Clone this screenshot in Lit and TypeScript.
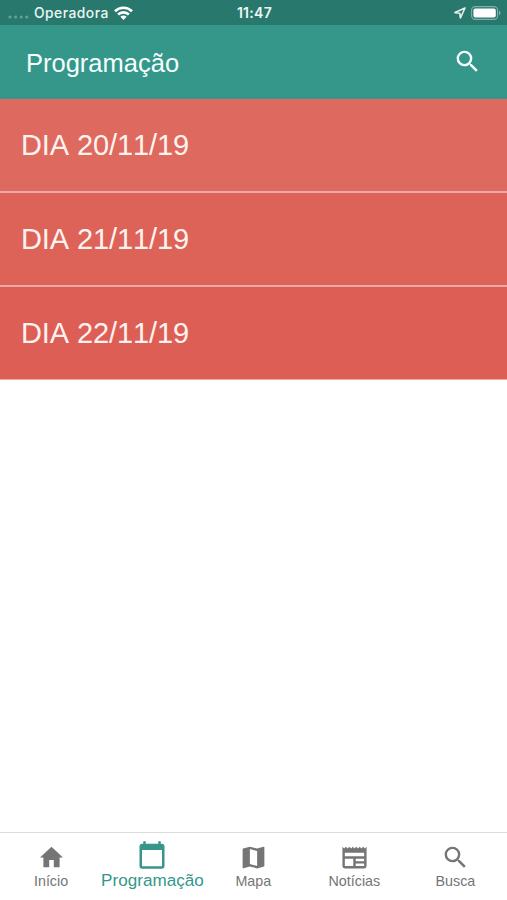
import { LitElement, html, svg, css } from "lit";
import { customElement } from "lit/decorators.js";
import { classMap } from "lit/directives/class-map.js";

const SEARCH =
  "M15.5 14h-.79l-.28-.27A6.47 6.47 0 0 0 16 9.5 6.5 6.5 0 1 0 9.5 16c1.61 0 3.09-.59 4.23-1.57l.27.28v.79l5 4.99L20.49 19l-4.99-5zm-6 0C7.01 14 5 11.99 5 9.5S7.01 5 9.5 5 14 7.01 14 9.5 11.99 14 9.5 14z";

const TABS = [
  { label: "Início", path: "M10.1 20v-6h3.8v6h4.8v-8h2.8L12 3 2.5 12h2.8v8z" },
  {
    label: "Programação",
    active: true,
    path: "M20 3h-1V1h-2v2H7V1H5v2H4c-1.1 0-2 .9-2 2v16c0 1.1.9 2 2 2h16c1.1 0 2-.9 2-2V5c0-1.1-.9-2-2-2zm0 18H4V8h16v13z",
  },
  {
    label: "Mapa",
    path: "M20.5 3l-.16.03L15 4.6 9 3 3.36 4.5c-.21.07-.36.25-.36.48V20.5c0 .28.22.5.5.5l.16-.03L9 19.4l6 1.6 5.64-1.5c.21-.07.36-.25.36-.48V3.5c0-.28-.22-.5-.5-.5zM15 19l-6-1.7V5l6 1.7V19z",
  },
  {
    label: "Notícias",
    path: "M2 3l1.43 1.5L4.86 3l1.43 1.5L7.71 3l1.43 1.5L10.57 3 12 4.5 13.43 3l1.43 1.5L16.29 3l1.42 1.5L19.14 3l1.43 1.5L22 3v16a2 2 0 0 1-2 2H4a2 2 0 0 1-2-2zM4 8v3h16V8zM4 13v6h7v-6zM13 13v2h7v-2zM13 17v2h7v-2z",
  },
  { label: "Busca", path: SEARCH },
];

const DAYS = ["20/11/19", "21/11/19", "22/11/19"];

const icon = (path: string) =>
  html`<svg class="icon" viewBox="0 0 24 24">${svg`<path fill-rule="evenodd" d=${path} />`}</svg>`;

@customElement("app-root")
export class AppRoot extends LitElement {
  static styles = css`
    :host {
      display: flex;
      flex-direction: column;
      height: 900px;
      background: #fff;
      font-family: "Liberation Sans", Arial, sans-serif;
      font-kerning: none;
      overflow: hidden;
    }
    svg {
      display: block;
      flex: none;
    }
    .icon {
      width: 29px;
      height: 29px;
      fill: currentColor;
    }
    .status {
      display: grid;
      grid-template-columns: 1fr auto 1fr;
      align-items: center;
      height: 25px;
      padding: 1px 6px 0 8px;
      box-sizing: border-box;
      background: #29786d;
      color: #edf6f4;
      font: 600 13.5px/24px Inter, sans-serif;
    }
    .carrier,
    .power {
      display: flex;
      align-items: center;
    }
    .carrier {
      font-weight: 500;
      font-size: 13.8px;
      letter-spacing: 0.5px;
    }
    .time {
      font-size: 14px;
      letter-spacing: 0.3px;
    }
    .dots {
      width: 21px;
      height: 4px;
      margin: 8px 5px 0 0;
      fill: #63a097;
    }
    .wifi {
      width: 19px;
      height: 14px;
      margin-left: 5px;
      fill: none;
      stroke: #fff;
      stroke-width: 2.6;
    }
    .wifi .core {
      fill: #fff;
      stroke: none;
    }
    .power {
      justify-content: flex-end;
    }
    .arrow {
      width: 12px;
      height: 12px;
      margin-right: 5px;
      fill: none;
      stroke: #e4f1ef;
      stroke-width: 1.6;
      stroke-linejoin: round;
    }
    .battery {
      width: 30px;
      height: 14px;
    }
    .bar {
      display: flex;
      align-items: center;
      justify-content: space-between;
      height: 74px;
      padding: 0 25px 1px 26px;
      box-sizing: border-box;
      background: #34978a;
      color: #f6fffd;
    }
    .title {
      font-size: 25.5px;
      line-height: 30px;
      margin-top: 3px;
    }
    .day {
      display: flex;
      align-items: center;
      height: 94px;
      box-sizing: border-box;
      padding: 0 21px;
      border-bottom: 2px solid #edaaa3;
      background: #de695e;
      color: #fff3f0;
      font-size: 29px;
      letter-spacing: -0.1px;
    }
    .day:nth-child(2) {
      background: #dd6359;
    }
    .day:nth-child(3) {
      background: #dd5e55;
      height: 93px;
      border-bottom-width: 1px;
    }
    .tabs {
      display: grid;
      grid-template-columns: repeat(5, 1fr);
      height: 68px;
      box-sizing: border-box;
      margin-top: auto;
      border-top: 1px solid #dcdcdc;
      color: #757575;
    }
    .tab {
      display: flex;
      flex-direction: column;
      align-items: center;
      padding-top: 10px;
      font-size: 14.3px;
      line-height: 19px;
      white-space: nowrap;
    }
    .tab:first-child {
      padding-left: 1px;
    }
    .tab:nth-child(n + 3) {
      padding-right: 2px;
    }
    .tab.active {
      padding-top: 7px;
      color: #34978a;
      font-size: 17.1px;
      line-height: 22px;
    }
    .tab.active .icon {
      width: 30px;
      height: 30px;
    }
  `;

  render() {
    return html`
      <div class="status">
        <div class="carrier">
          <svg class="dots" viewBox="0 0 21 4">
            <circle cx="2" cy="2" r="1.6" /><circle cx="7.6" cy="2" r="1.6" />
            <circle cx="13.2" cy="2" r="1.6" /><circle cx="18.8" cy="2" r="1.6" />
          </svg>
          <span>Operadora</span>
          <svg class="wifi" viewBox="0 0 19 14">
            <path d="M1 5.2a12.2 12.2 0 0 1 17 0M4.1 8.5a7.8 7.8 0 0 1 10.8 0" />
            <path class="core" d="M6.4 10.8a4.4 4.4 0 0 1 6.2 0L9.5 13.9z" />
          </svg>
        </div>
        <span class="time">11:47</span>
        <div class="power">
          <svg class="arrow" viewBox="0 0 12 12"><path d="M11 1 1 5.6l4.8.6.6 4.8z" /></svg>
          <svg class="battery" viewBox="0 0 30 14">
            <rect x=".6" y=".6" width="26" height="12.8" rx="3.6" fill="none" stroke="#7fb0a9" stroke-width="1.1" />
            <rect x="2.4" y="2.4" width="22.4" height="9.2" rx="2" fill="#fff" />
            <path d="M28 4.8c1.9.5 1.9 3.9 0 4.4z" fill="#7fb0a9" />
          </svg>
        </div>
      </div>
      <header class="bar">
        <span class="title">Programação</span>
        ${icon(SEARCH)}
      </header>
      <main>${DAYS.map((day) => html`<div class="day">DIA ${day}</div>`)}</main>
      <nav class="tabs">
        ${TABS.map(
          (tab) => html`<div class=${classMap({ tab: true, active: !!tab.active })}>
            ${icon(tab.path)}<span>${tab.label}</span>
          </div>`
        )}
      </nav>
    `;
  }
}
